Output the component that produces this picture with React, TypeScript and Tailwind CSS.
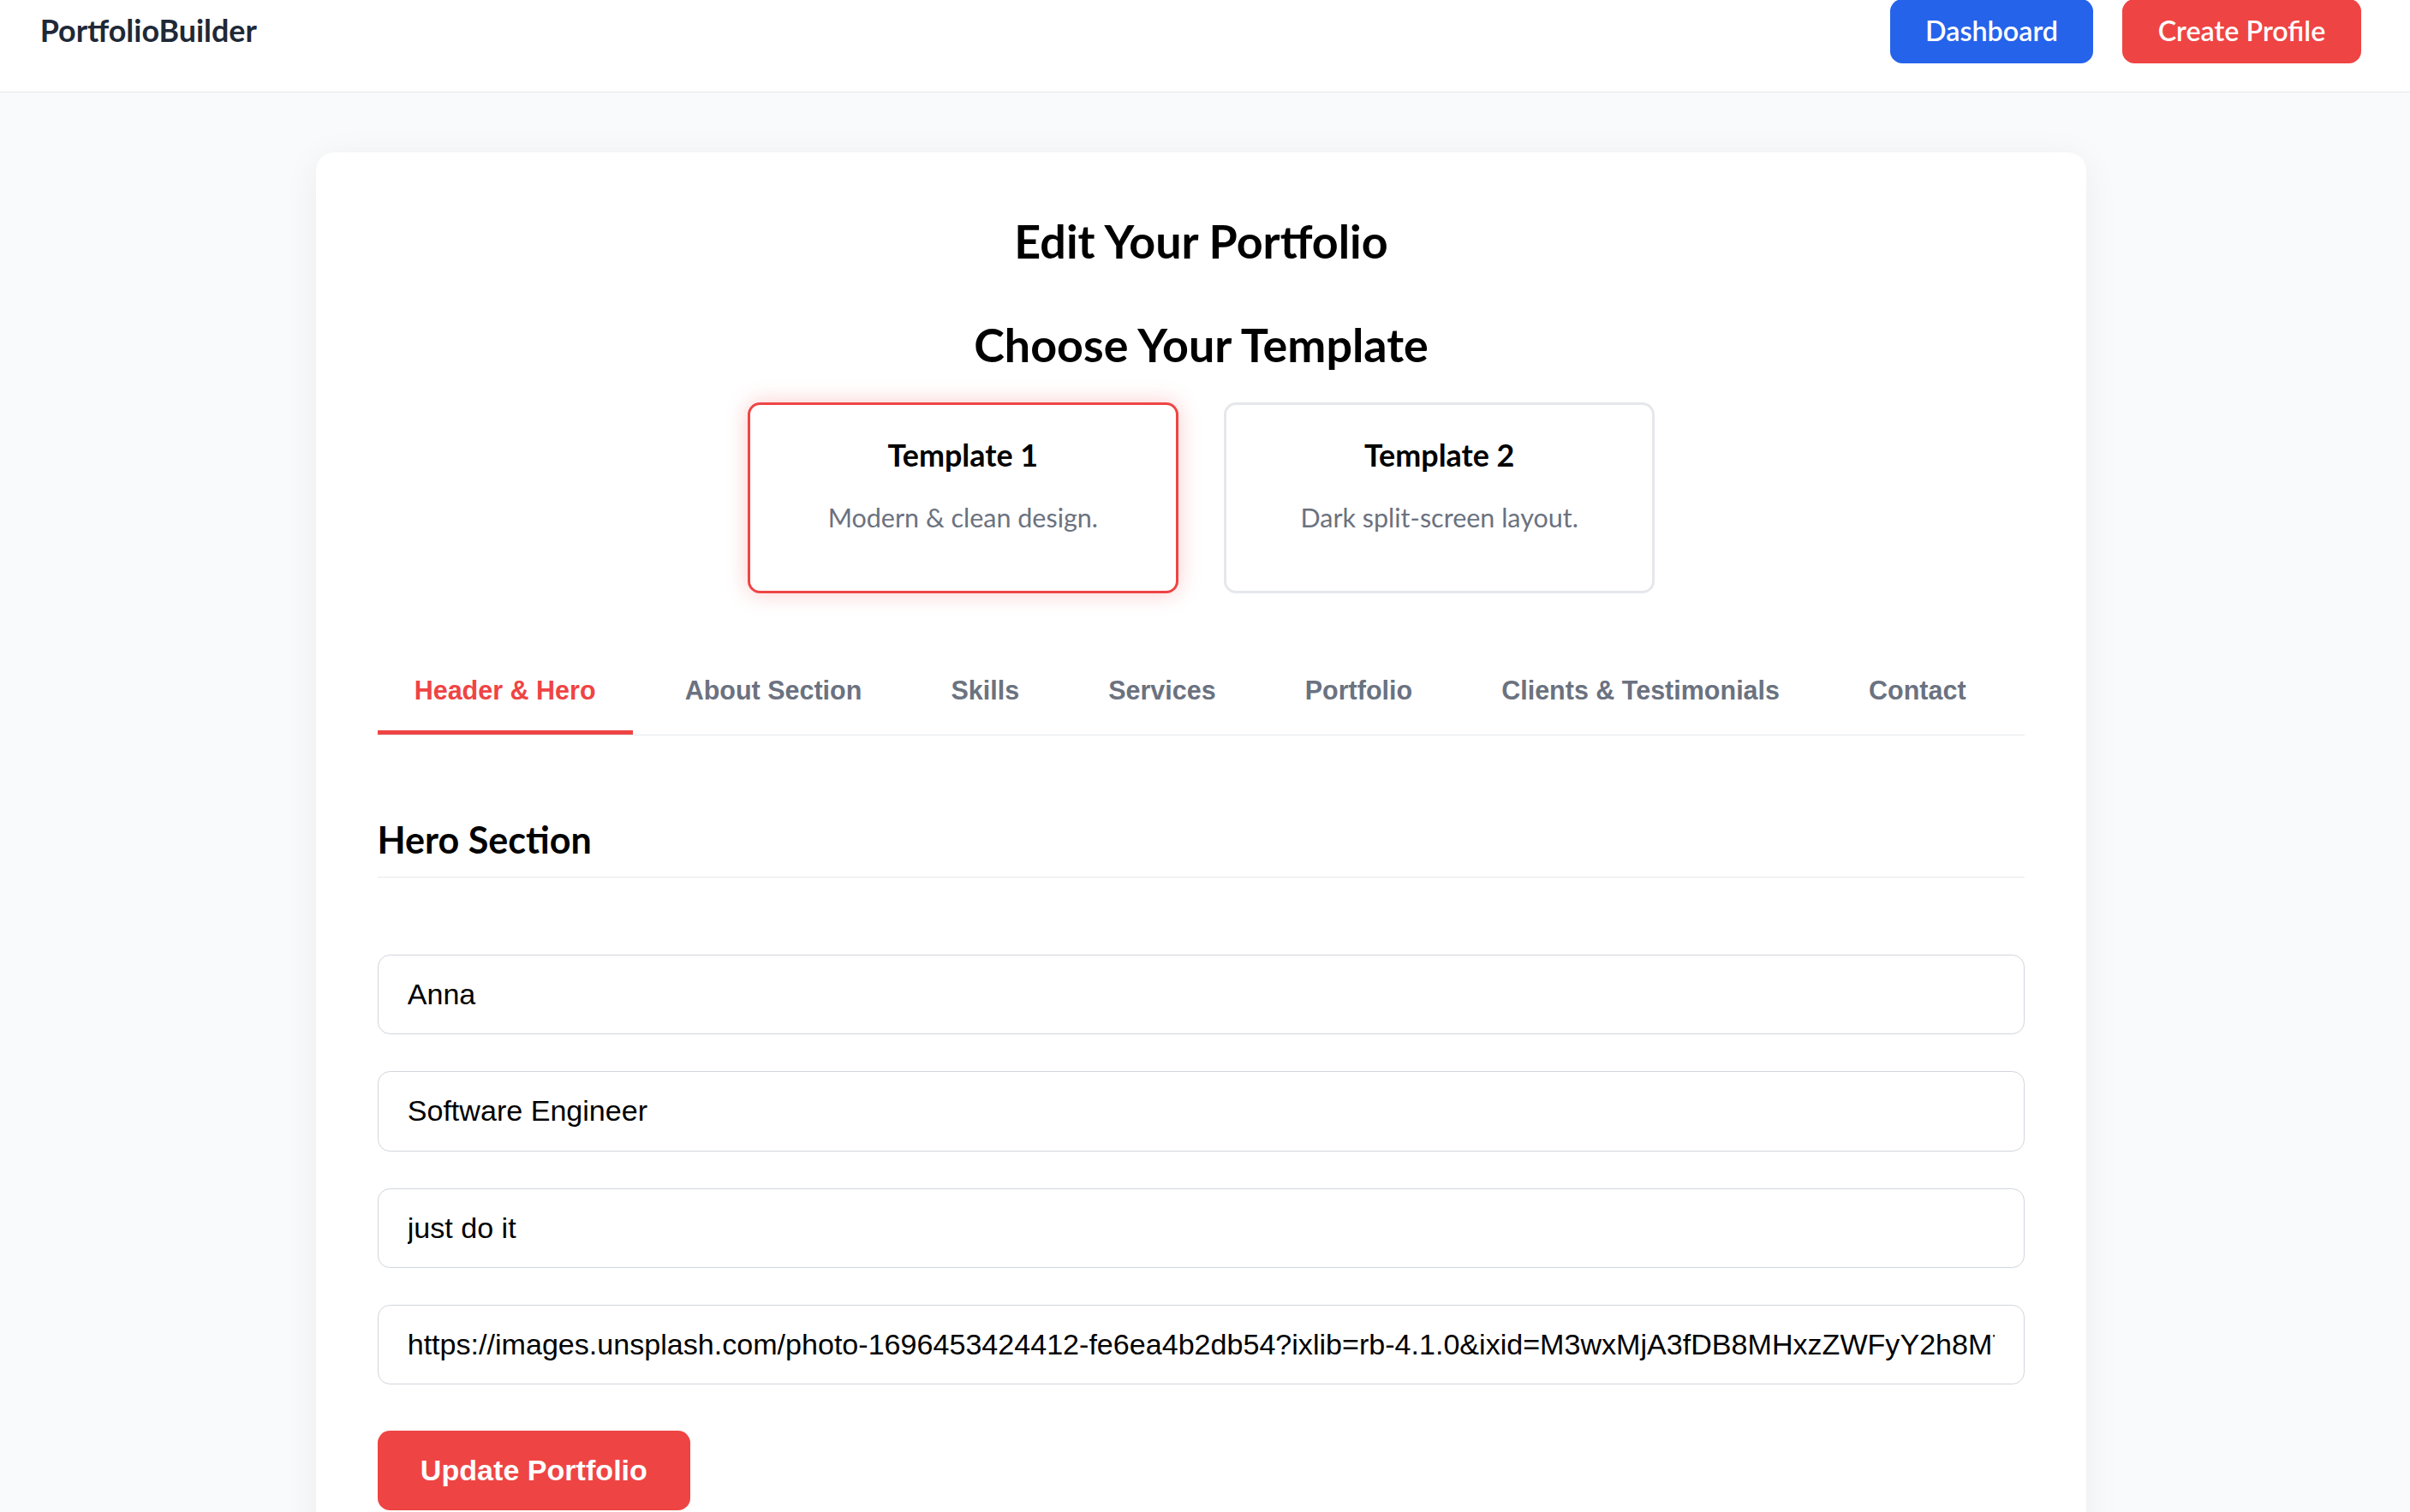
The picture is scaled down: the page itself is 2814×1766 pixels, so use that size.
import { useState } from "react";

const tabs = ["Header & Hero", "About Section", "Skills", "Services", "Portfolio", "Clients & Testimonials", "Contact"];

const templates = [
  { id: 1, title: "Template 1", text: "Modern & clean design." },
  { id: 2, title: "Template 2", text: "Dark split-screen layout." },
];

const heroFields = [
  "Anna",
  "Software Engineer",
  "just do it",
  "https://images.unsplash.com/photo-1696453424412-fe6ea4b2db54?ixlib=rb-4.1.0&ixid=M3wxMjA3fDB8MHxzZWFyY2h8MTJ8fGFubmF8ZW58MHx8MHx8fDA%3D",
];

export default function App() {
  const [active, setActive] = useState(0);
  const [picked, setPicked] = useState(1);

  return (
    <div className="[zoom:1.7946] min-h-screen bg-[#f9fafb] font-['Lato','Open_Sans',sans-serif]">
      <header className="-mt-[19px] flex h-[79px] items-center justify-between border-b border-[#e5e7eb] bg-white pl-[26px] pr-8">
        <span className="text-xl font-bold text-[#1f2937]">PortfolioBuilder</span>
        <div className="flex items-center gap-[19px]">
          <button className="h-[42px] rounded-lg bg-[#2563eb] px-[23px] text-lg font-semibold text-white">Dashboard</button>
          <button className="h-[42px] rounded-lg bg-[#ef4444] px-[23px] text-lg font-semibold text-white">Create Profile</button>
        </div>
      </header>

      <main className="pt-[39px] pr-[5px] pb-10">
        <div className="mx-auto max-w-6xl rounded-xl bg-white p-10 shadow-[0_4px_24px_rgba(0,0,0,0.06)]">
          <h1 className="text-center text-3xl font-bold text-black">Edit Your Portfolio</h1>
          <h2 className="mt-[31px] text-center text-3xl font-bold text-black">Choose Your Template</h2>

          <div className="mt-5 flex justify-center gap-[30px]">
            {templates.map((t) => (
              <button
                key={t.id}
                onClick={() => setPicked(t.id)}
                className={
                  picked === t.id
                    ? "w-[280px] rounded-lg border-2 border-[#ef4444] bg-white pt-[19px] pb-[36px] text-center shadow-[0_0_14px_rgba(239,68,68,0.28)]"
                    : "w-[280px] rounded-lg border-2 border-[#e5e7eb] bg-white pt-[19px] pb-[36px] text-center"
                }
              >
                <div className="text-xl leading-7 font-bold text-black">{t.title}</div>
                <div className="mt-[14px] text-[17px] leading-6 text-[#6b7280]">{t.text}</div>
              </button>
            ))}
          </div>

          <nav className="mt-[40px] flex gap-[10px] border-b border-[#e5e7eb] font-['Liberation_Sans',Arial,sans-serif]">
            {tabs.map((tab, i) => (
              <button
                key={tab}
                onClick={() => setActive(i)}
                className={
                  i === active
                    ? "border-b-[3px] border-[#ef4444] px-6 pt-[11px] pb-[14px] text-[17px] leading-6 font-bold text-[#ef4444]"
                    : "border-b-[3px] border-transparent px-6 pt-[11px] pb-[14px] text-[17px] leading-6 font-bold text-[#6b7280]"
                }
              >
                {tab}
              </button>
            ))}
          </nav>

          <section className="mt-[52px]">
            <h3 className="border-b border-[#e5e7eb] pb-2 text-2xl font-bold text-black">Hero Section</h3>
            <div className="mt-[50px] flex flex-col gap-6">
              {heroFields.map((v) => (
                <input
                  key={v}
                  defaultValue={v}
                  className="h-[52px] w-full rounded-lg border border-[#d1d5db] px-[19px] font-['Liberation_Sans',Arial,sans-serif] text-[19px] text-black outline-none"
                />
              ))}
            </div>
            <button className="mt-[30px] h-[52px] rounded-lg bg-[#ef4444] px-7 font-['Liberation_Sans',Arial,sans-serif] text-[19px] font-bold text-white">
              Update Portfolio
            </button>
          </section>
        </div>
      </main>
    </div>
  );
}
